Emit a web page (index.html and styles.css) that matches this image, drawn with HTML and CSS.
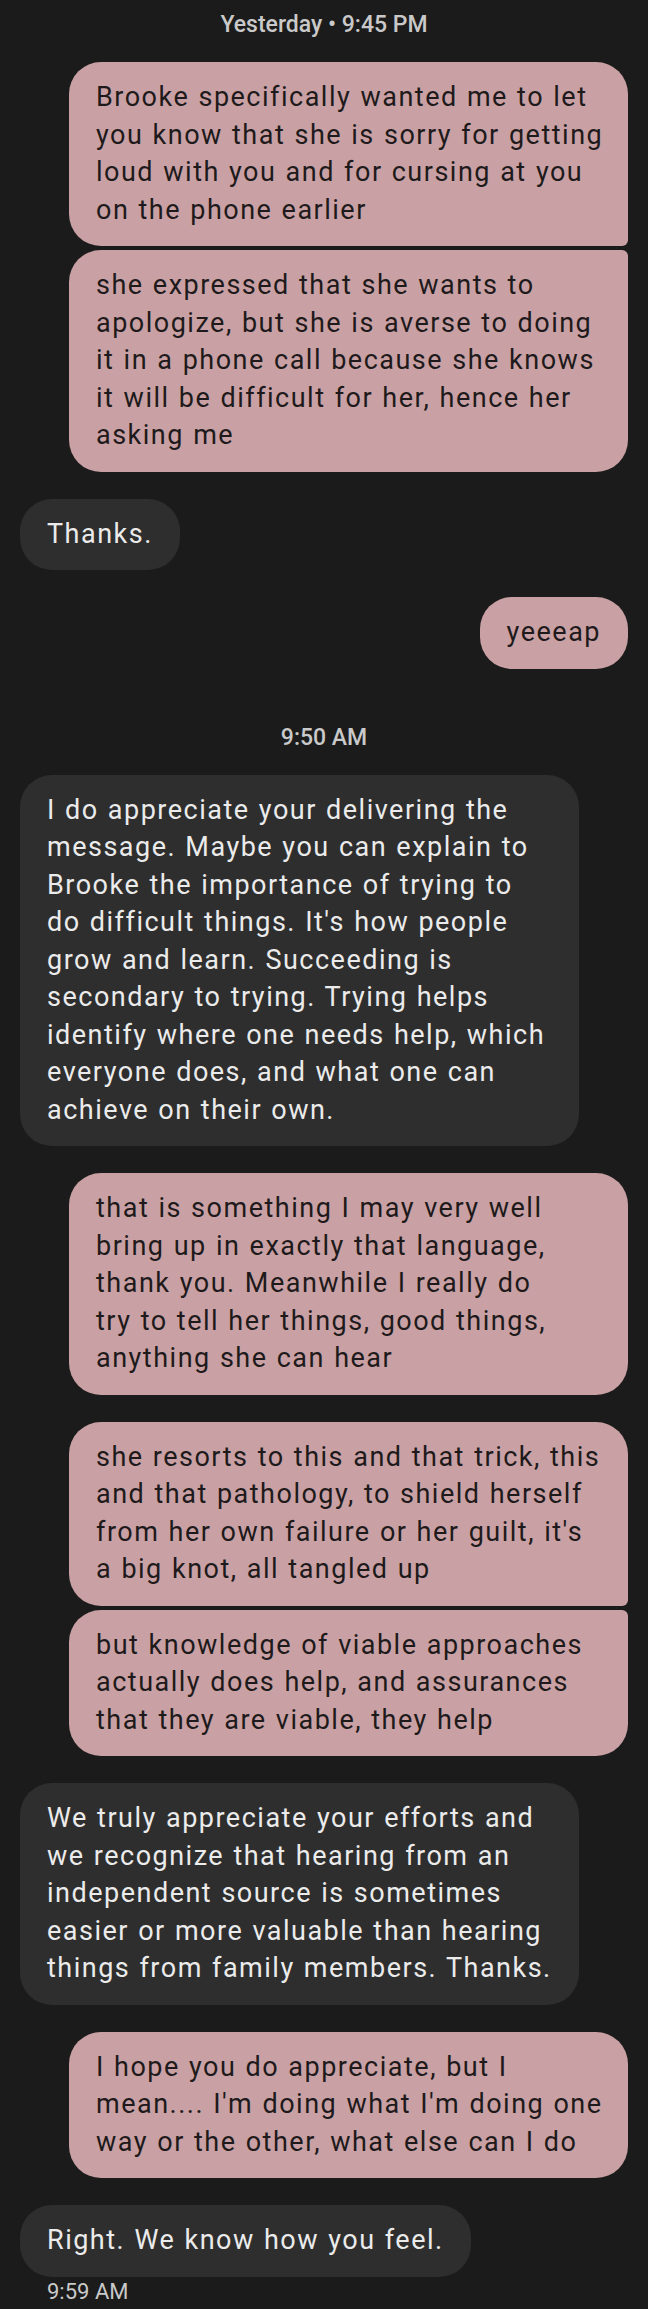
FILE: index.html
```html
<!DOCTYPE html>
<html lang="en">
<head>
<meta charset="utf-8">
<title>Messages</title>
<link rel="stylesheet" href="styles.css">
</head>
<body>
<main class="thread">
  <div class="stamp stamp-top">Yesterday • 9:45 PM</div>

  <div class="msg sent full first">Brooke specifically wanted me to let<br>you know that she is sorry for getting<br>loud with you and for cursing at you<br>on the phone earlier</div>
  <div class="msg sent full last tight">she expressed that she wants to<br>apologize, but she is averse to doing<br>it in a phone call because she knows<br>it will be difficult for her, hence her<br>asking me</div>

  <div class="msg recv gap">Thanks.</div>
  <div class="msg sent gap">yeeeap</div>

  <div class="stamp stamp-mid">9:50 AM</div>

  <div class="msg recv full">I do appreciate your delivering the<br>message. Maybe you can explain to<br>Brooke the importance of trying to<br>do difficult things. It's how people<br>grow and learn. Succeeding is<br>secondary to trying. Trying helps<br>identify where one needs help, which<br>everyone does, and what one can<br>achieve on their own.</div>

  <div class="msg sent full gap">that is something I may very well<br>bring up in exactly that language,<br>thank you. Meanwhile I really do<br>try to tell her things, good things,<br>anything she can hear</div>

  <div class="msg sent full first gap">she resorts to this and that trick, this<br>and that pathology, to shield herself<br>from her own failure or her guilt, it's<br>a big knot, all tangled up</div>
  <div class="msg sent full last tight">but knowledge of viable approaches<br>actually does help, and assurances<br>that they are viable, they help</div>

  <div class="msg recv full gap">We truly appreciate your efforts and<br>we recognize that hearing from an<br>independent source is sometimes<br>easier or more valuable than hearing<br>things from family members. Thanks.</div>

  <div class="msg sent full gap">I hope you do appreciate, but I<br>mean.... I'm doing what I'm doing one<br>way or the other, what else can I do</div>

  <div class="msg recv gap">Right. We know how you feel.</div>
  <div class="stamp stamp-end">9:59 AM</div>
</main>
</body>
</html>
```

FILE: styles.css
```css
html, body {
  margin: 0;
  padding: 0;
  background: #1b1b1b;
}

body {
  font-family: Roboto, "Noto Sans", "Liberation Sans", sans-serif;
}

.thread {
  display: flex;
  flex-direction: column;
  padding: 0 20px;
}

.stamp {
  font-size: 23px;
  line-height: 28px;
  color: #c9c9c9;
}

.stamp-top {
  align-self: center;
  font-weight: 500;
  margin-top: 11px;
  margin-bottom: 23px;
}

.stamp-mid {
  align-self: center;
  font-weight: 500;
  margin-top: 55px;
  margin-bottom: 23px;
}

.stamp-end {
  align-self: flex-start;
  margin-left: 27px;
  margin-top: 1px;
  font-size: 22px;
}

.msg {
  box-sizing: border-box;
  max-width: 559px;
  padding: 17px 27px;
  font-size: 27px;
  line-height: 37.5px;
  letter-spacing: 1.5px;
  word-spacing: 1px;
  border-radius: 32px;
  white-space: nowrap;
}

.msg.full {
  width: 559px;
}

.sent {
  align-self: flex-end;
  background: #c9a1a4;
  color: #1e1a1b;
}

.recv {
  align-self: flex-start;
  background: #2e2e2e;
  color: #ebebeb;
}

.gap {
  margin-top: 27px;
}

.tight {
  margin-top: 4px;
}

.sent.first {
  border-bottom-right-radius: 6px;
}

.sent.last {
  border-top-right-radius: 6px;
}
```
